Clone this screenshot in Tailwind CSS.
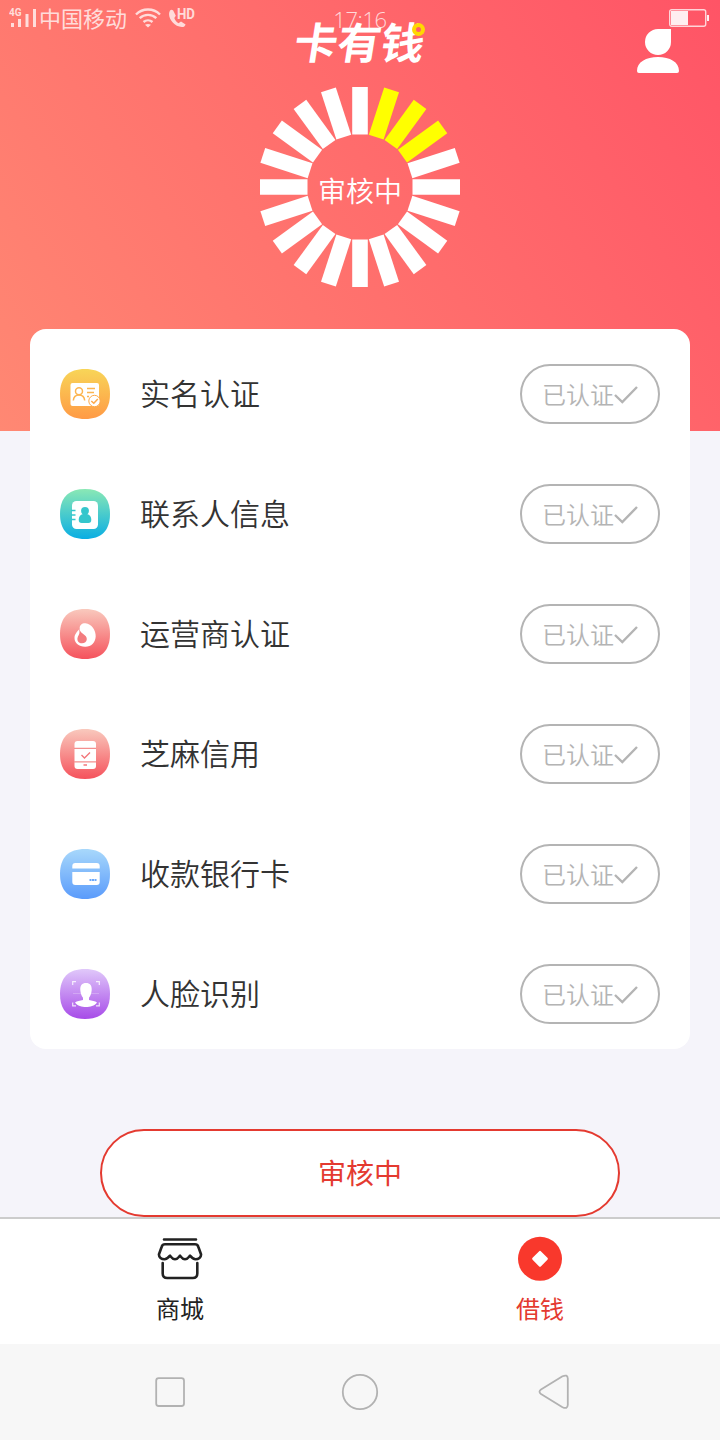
<!DOCTYPE html>
<html lang="zh-CN">
<head>
<meta charset="utf-8">
<title>卡有钱</title>
<script src="https://cdn.jsdelivr.net/npm/@tailwindcss/browser@4"></script>
</head>
<body class="w-[720px] h-[1440px] overflow-hidden bg-[#f5f4fa] font-['Noto_Sans_CJK_SC',sans-serif] text-[#333333]">
<div class="flex flex-col h-[1440px]">
  <header class="relative h-[431px] shrink-0 bg-linear-[55deg,#ff8873,#ff5466] text-white flex flex-col items-center">
    <!-- status bar -->
    <div class="w-full h-9 grid grid-cols-[320px_80px_320px] items-center text-white/75">
      <div class="flex items-center h-9 pl-[9px]">
        <svg class="w-[29px] h-9" viewBox="0 0 29 36" fill="currentColor">
          <text x="0" y="16" font-size="10" font-weight="700" font-family="Roboto">4G</text>
          <path d="M2 23h3v4H2zM9 19h3v8H9zM16.500 14h3v13h-3zM24 9h3v18h-3z"/>
        </svg>
        <span class="text-[22px] leading-9 ml-[1px] -mt-0.5">中国移动</span>
        <svg class="w-[26px] h-9 ml-[8px]" viewBox="0 0 26 36" fill="none" stroke="currentColor" stroke-width="2.400">
          <path d="M1 14.500a17 17 0 0 1 24 0M4.700 18.200a12 12 0 0 1 16.600 0M8.500 22a7 7 0 0 1 9 0"/>
          <path d="M10 24.800q3-1.800 6 0l-3 2.800z" fill="currentColor" stroke="none"/>
        </svg>
        <svg class="w-[28px] h-9 ml-[7px]" viewBox="0 0 28 36" fill="currentColor">
          <path d="M2 10.500C-1.500 16 5 27 14 27c2 0 3-1 3.600-2.600L13 21.500l-2.500 1.800C8.500 22 7 20 6.300 18l1.500-2.200L5.200 10.500Q3.500 9 2 10.500z"/>
          <text x="9" y="19" font-size="14" font-weight="700" font-family="Roboto" textLength="18" lengthAdjust="spacingAndGlyphs">HD</text>
        </svg>
      </div>
      <span class="text-center text-[22px] leading-8 mt-[1px] tracking-[-0.4px] font-['Open_Sans',sans-serif] font-light">17:16</span>
      <svg class="justify-self-end mr-[11px] w-10 h-[18px]" viewBox="0 0 40 18">
        <rect x=".700" y=".700" width="36" height="16.600" rx="2" fill="none" stroke="currentColor" stroke-width="1.400"/>
        <path d="M2 2h17v14H2zM38 6h2v6h-2z" fill="#fff" fill-opacity=".9"/>
      </svg>
    </div>
    <!-- brand name over the clock -->
    <svg class="absolute left-[280px] top-[10px] w-[160px] h-[66px]" viewBox="0 0 160 66">
      <text transform="translate(12 49) skewX(-9)" x="0" y="0" font-size="43" font-weight="700" textLength="130" lengthAdjust="spacingAndGlyphs" fill="#fff">卡有钱</text>
      <circle cx="138.500" cy="19.500" r="4.500" fill="#ff6068" stroke="#ffd800" stroke-width="4"/>
    </svg>
    <svg class="absolute left-[636px] top-[28px] w-11 h-[46px]" viewBox="0 0 44 46" fill="#fff">
      <path d="M22 1h13v13A13 13 0 1 1 22 1zM1 43c0-9 9-14 21-14s21 5 21 14q0 2-2 2H3q-2 0-2-2z"/>
    </svg>
    <!-- progress ring -->
    <div class="mt-[51px] w-[200px] h-[200px] grid">
      <svg id="ring" class="col-start-1 row-start-1 w-[200px] h-[200px]" viewBox="-100 -100 200 200" stroke="#fff" stroke-width="15.600"></svg>
      <span class="col-start-1 row-start-1 place-self-center text-[28px] leading-10 mt-[6px] font-[350]">审核中</span>
    </div>
  </header>

  <main class="relative -mt-[102px] h-[889px] shrink-0 px-[30px] flex flex-col items-center">
    <ul class="w-[660px] h-[720px] bg-white rounded-2xl px-[30px] pt-[5px]">
      <li class="h-[120px] flex items-center">
        <svg class="w-[50px] h-[50px]" viewBox="0 0 50 50">
          <defs>
            <path id="tile" d="M25 0C41.500 0 50 8.500 50 25S41.500 50 25 50 0 41.500 0 25 8.500 0 25 0z"/>
            <linearGradient id="g1" x2="0" y2="1"><stop stop-color="#f8d558"/><stop offset="1" stop-color="#ff9a45"/></linearGradient>
            <linearGradient id="g2" x2="0" y2="1"><stop stop-color="#8ae8b5"/><stop offset="1" stop-color="#0aaee3"/></linearGradient>
            <linearGradient id="g3" x2="0" y2="1"><stop stop-color="#f9c9bd"/><stop offset="1" stop-color="#f5525c"/></linearGradient>
            <linearGradient id="g5" x2="0" y2="1"><stop stop-color="#a8d8fb"/><stop offset="1" stop-color="#5a9bfb"/></linearGradient>
            <linearGradient id="g6" x2="0" y2="1"><stop stop-color="#e0c8fa"/><stop offset="1" stop-color="#a74be8"/></linearGradient>
          </defs>
          <use href="#tile" fill="url(#g1)"/>
          <rect x="10.500" y="14" width="28.500" height="23" rx="2" fill="#fff"/>
          <g fill="none" stroke="#fcb550" stroke-width="1.500"><circle cx="19" cy="22.300" r="3.500"/><path d="M13.300 31.500q.500-5.500 5.700-5.500t5.700 5.500M27 19.500h8M27 23.500h7M27 27.500h2"/></g>
          <circle cx="34.500" cy="32" r="5.700" fill="#fff" stroke="#fda94a" stroke-width="1"/>
          <path d="M31.300 32l2.500 2.300 4-4.300" fill="none" stroke="#fda94a" stroke-width="1.500"/>
        </svg>
        <span class="ml-[30px] text-[30px] flex-1 -mt-[3px] font-[350]">实名认证</span>
        <div class="w-[140px] h-[60px] rounded-full border-2 border-[#b4b4b4] text-[#b4b4b4] flex items-center justify-center text-2xl font-[350]"><span>已认证</span><svg class="w-6 h-6 mt-0.5" viewBox="0 0 24 24" fill="none" stroke="currentColor" stroke-width="2.400"><path d="M1 12l7.300 7L23 4"/></svg></div>
      </li>
      <li class="h-[120px] flex items-center">
        <svg class="w-[50px] h-[50px]" viewBox="0 0 50 50">
          <use href="#tile" fill="url(#g2)"/>
          <rect x="12" y="12" width="26" height="28" rx="4.500" fill="#fff"/>
          <path d="M11 21.500h4.500M11 26h4.500M11 30.500h4.500" stroke="#34c7cd" stroke-width="1.600"/>
          <circle cx="25" cy="21.800" r="3.900" fill="#35c6cc"/>
          <path d="M23 25h4c2.800.800 4.300 2.800 4.300 5.800q0 3.200-3 3.200h-6.600q-3 0-3-3.200c0-3 1.500-5 4.300-5.800z" fill="#35c6cc"/>
        </svg>
        <span class="ml-[30px] text-[30px] flex-1 -mt-[3px] font-[350]">联系人信息</span>
        <div class="w-[140px] h-[60px] rounded-full border-2 border-[#b4b4b4] text-[#b4b4b4] flex items-center justify-center text-2xl font-[350]"><span>已认证</span><svg class="w-6 h-6 mt-0.5" viewBox="0 0 24 24" fill="none" stroke="currentColor" stroke-width="2.400"><path d="M1 12l7.300 7L23 4"/></svg></div>
      </li>
      <li class="h-[120px] flex items-center">
        <svg class="w-[50px] h-[50px]" viewBox="0 0 50 50">
          <use href="#tile" fill="url(#g3)"/>
          <path d="M19.500 20C19.500 16 22 14 25.500 14.200c6 .500 10.500 7 10.200 13.300C35.300 34 31 38 25 37.800c-6-.200-10.500-3.500-10.500-8.800 0-4 2.500-6 5-9z" fill="#fff"/>
          <path d="M19.600 17.500c-.400 3.500.700 5.200 3 7 2.800 2 4.400 3.500 4.200 5.800-.200 2.500-2.200 4-4.800 4-3 0-4.800-2-4.600-4.800.200-2.700 2.300-4 2.100-6.500q-.600-2.500.100-5.500z" fill="#f37c7f"/>
        </svg>
        <span class="ml-[30px] text-[30px] flex-1 -mt-[3px] font-[350]">运营商认证</span>
        <div class="w-[140px] h-[60px] rounded-full border-2 border-[#b4b4b4] text-[#b4b4b4] flex items-center justify-center text-2xl font-[350]"><span>已认证</span><svg class="w-6 h-6 mt-0.5" viewBox="0 0 24 24" fill="none" stroke="currentColor" stroke-width="2.400"><path d="M1 12l7.300 7L23 4"/></svg></div>
      </li>
      <li class="h-[120px] flex items-center">
        <svg class="w-[50px] h-[50px]" viewBox="0 0 50 50">
          <use href="#tile" fill="url(#g3)"/>
          <rect x="14.500" y="12" width="21.500" height="28" rx="3" fill="#fff"/>
          <path d="M14 19.300h22M14 32.800h22" stroke="#f48f8e" stroke-width="1.200"/>
          <path d="M21.500 26l3 3 5.500-5.500M23.500 36h3.500" fill="none" stroke="#f3777b" stroke-width="1.400"/>
        </svg>
        <span class="ml-[30px] text-[30px] flex-1 -mt-[3px] font-[350]">芝麻信用</span>
        <div class="w-[140px] h-[60px] rounded-full border-2 border-[#b4b4b4] text-[#b4b4b4] flex items-center justify-center text-2xl font-[350]"><span>已认证</span><svg class="w-6 h-6 mt-0.5" viewBox="0 0 24 24" fill="none" stroke="currentColor" stroke-width="2.400"><path d="M1 12l7.300 7L23 4"/></svg></div>
      </li>
      <li class="h-[120px] flex items-center">
        <svg class="w-[50px] h-[50px]" viewBox="0 0 50 50">
          <use href="#tile" fill="url(#g5)"/>
          <path d="M12.300 19.500V17q0-3 3-3h21.400q3 0 3 3v2.500zM12.300 23h27.400v10q0 3-3 3H15.300q-3 0-3-3z" fill="#fff"/>
          <path d="M29.500 31h7" stroke="#6aa8fb" stroke-width="2" stroke-dasharray="2 .5"/>
        </svg>
        <span class="ml-[30px] text-[30px] flex-1 -mt-[3px] font-[350]">收款银行卡</span>
        <div class="w-[140px] h-[60px] rounded-full border-2 border-[#b4b4b4] text-[#b4b4b4] flex items-center justify-center text-2xl font-[350]"><span>已认证</span><svg class="w-6 h-6 mt-0.5" viewBox="0 0 24 24" fill="none" stroke="currentColor" stroke-width="2.400"><path d="M1 12l7.300 7L23 4"/></svg></div>
      </li>
      <li class="h-[120px] flex items-center">
        <svg class="w-[50px] h-[50px]" viewBox="0 0 50 50">
          <use href="#tile" fill="url(#g6)"/>
          <path d="M12.700 16v-3.300H16M36 12.700h3.300V16M12.700 33.500v3.300H16M36 36.800h3.300v-3.300" fill="none" stroke="#fff" stroke-width="1.200" stroke-opacity=".8"/>
          <path d="M13 24.500h26" stroke="#fff" stroke-opacity=".3" stroke-width=".8"/>
          <path d="M26 14c4 0 6 2.500 5.700 7-.300 3.500-1.200 6-2.700 7.700v2.300c3 1 6 1 8 2.500C34.500 37 30 38 26 38s-8.500-1-11-4.500c2-1.500 5-1.500 8-2.500v-2.300c-1.500-1.700-2.400-4.200-2.700-7.700-.3-4.500 1.700-7 5.700-7z" fill="#fff"/>
        </svg>
        <span class="ml-[30px] text-[30px] flex-1 -mt-[3px] font-[350]">人脸识别</span>
        <div class="w-[140px] h-[60px] rounded-full border-2 border-[#b4b4b4] text-[#b4b4b4] flex items-center justify-center text-2xl font-[350]"><span>已认证</span><svg class="w-6 h-6 mt-0.5" viewBox="0 0 24 24" fill="none" stroke="currentColor" stroke-width="2.400"><path d="M1 12l7.300 7L23 4"/></svg></div>
      </li>
    </ul>
    <button class="mt-20 w-[520px] h-[88px] shrink-0 rounded-full border-2 border-[#e43a30] bg-white text-[#e43a30] text-[28px] pb-0.5">审核中</button>
  </main>

  <nav class="h-[127px] shrink-0 -mt-px border-t-2 border-[#cccccc] bg-white grid grid-cols-2 text-2xl">
    <a class="flex flex-col items-center pt-[17px] text-[#222222]">
      <svg class="w-[46px] h-[46px]" viewBox="0 0 46 46" fill="none" stroke="currentColor" stroke-width="2.600" stroke-linecap="round" stroke-linejoin="round">
        <path d="M7 3.500h32M8 8.300h30Q40.500 8.300 41.200 10.500L44 18.200C44.300 21.500 41.500 23.300 38.500 23.300 36 23.300 34.500 21.500 33 19.700 31.500 21.500 30.500 23.300 28 23.300S24.500 21.500 23 19.700C21.500 21.500 20.500 23.300 18 23.300S14.500 21.500 13 19.700C11.500 21.500 10 23.300 7.500 23.300 4.500 23.300 1.700 21.500 2 18.200L4.800 10.500Q5.500 8.300 8 8.300zM5.700 27V37.500Q5.700 42 10.200 42H35.800Q40.300 42 40.300 37.500V27"/>
      </svg>
      <span class="leading-9 mt-[8px]">商城</span>
    </a>
    <a class="flex flex-col items-center pt-[17px] text-[#e43a30]">
      <svg class="w-[46px] h-[46px]" viewBox="0 0 46 46"><circle cx="23" cy="22.800" r="22" fill="#f9382c"/><rect x="17" y="16.800" width="12" height="12" rx="1.500" fill="#fff" transform="rotate(45 23 22.800)"/></svg>
      <span class="leading-9 mt-[8px]">借钱</span>
    </a>
  </nav>

  <footer class="h-24 shrink-0 bg-[#f7f7f7]">
    <svg class="w-[720px] h-24" viewBox="0 0 720 96" fill="none" stroke="#b2b2b2" stroke-width="1.800" stroke-linejoin="round">
      <rect x="156.200" y="34.200" width="27.800" height="27.800" rx="2.500"/>
      <circle cx="360" cy="48" r="17.200"/>
      <path d="M541 45.500L562.500 32.300Q567.500 30 567.800 34.500V61Q567.500 65.500 562.500 63.200L541 50Q538 47.800 541 45.500z"/>
    </svg>
  </footer>
</div>
<script>
  const ring = document.getElementById('ring');
  for (let i = 0; i < 20; i++) {
    const bar = document.createElementNS('http://www.w3.org/2000/svg', 'path');
    bar.setAttribute('d', 'M0-52.500V-102.200');
    bar.setAttribute('transform', 'rotate(' + i * 18 + ')');
    if (i > 0 && i < 4) bar.setAttribute('stroke', '#ffff00');
    ring.appendChild(bar);
  }
</script>
</body>
</html>
